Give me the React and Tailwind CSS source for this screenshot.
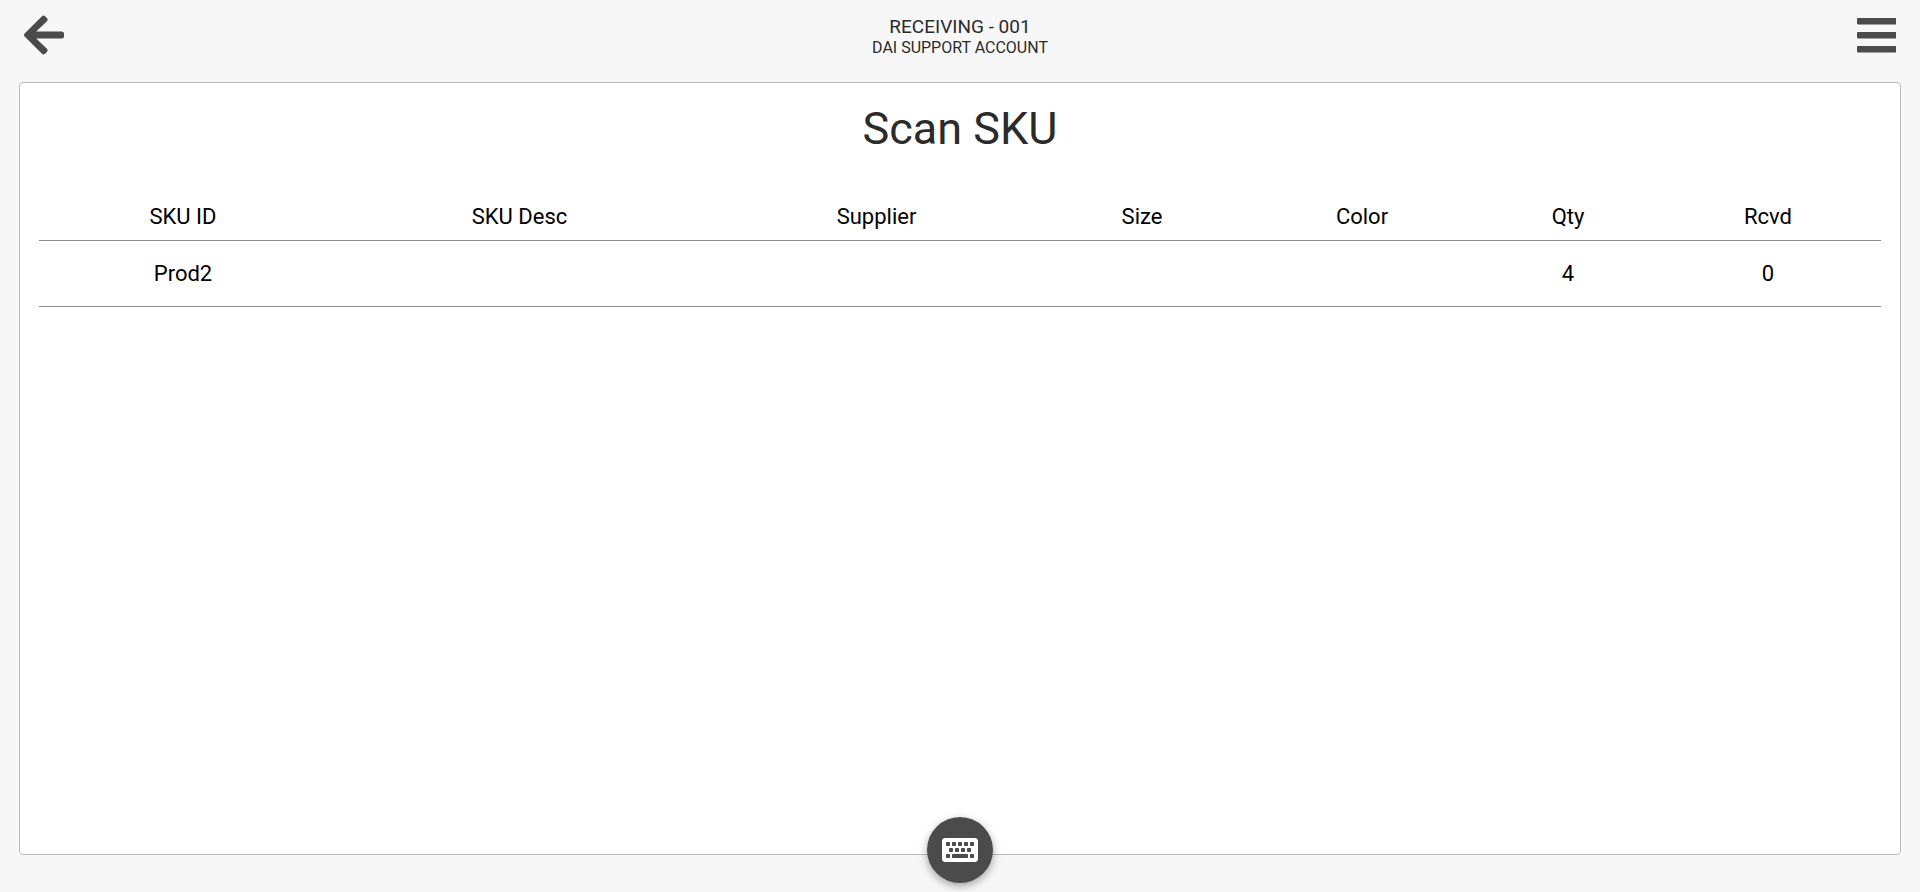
import React from 'react';
import { FaArrowLeft, FaKeyboard } from 'react-icons/fa';

const columns = [
  { key: 'sku', label: 'SKU ID', width: 'w-[288px]' },
  { key: 'desc', label: 'SKU Desc', width: 'w-[385px]' },
  { key: 'supplier', label: 'Supplier', width: 'w-[329px]' },
  { key: 'size', label: 'Size', width: 'w-[202px]' },
  { key: 'color', label: 'Color', width: 'w-[238px]' },
  { key: 'qty', label: 'Qty', width: 'w-[174px]' },
  { key: 'rcvd', label: 'Rcvd', width: 'w-[226px]' },
];

const rows = [{ sku: 'Prod2', desc: '', supplier: '', size: '', color: '', qty: 4, rcvd: 0 }];

function MenuIcon() {
  return (
    <svg viewBox="0 0 40 46" className="h-[46px] w-10" fill="currentColor" aria-hidden="true">
      <rect x="1" y="6" width="39.4" height="6.4" rx="0.8" />
      <rect x="1" y="20" width="39.4" height="6.4" rx="0.8" />
      <rect x="1" y="34" width="39.4" height="6.4" rx="0.8" />
    </svg>
  );
}

function Header() {
  return (
    <header className="flex h-[82px] items-start justify-between px-6 pt-3">
      <button type="button" aria-label="Back" className="text-[#4b4b4b]">
        <FaArrowLeft className="h-[46px] w-10" />
      </button>
      <div className="pt-1 text-center text-[#2b2b2b]">
        <div className="text-[19px] leading-[21px]">RECEIVING - 001</div>
        <div className="text-[16px] leading-[21px]">DAI SUPPORT ACCOUNT</div>
      </div>
      <button type="button" aria-label="Menu" className="text-[#4b4b4b]">
        <MenuIcon />
      </button>
    </header>
  );
}

function SkuTable() {
  return (
    <table className="w-full table-fixed border-collapse text-center text-[22px] leading-[26px] text-black">
      <thead>
        <tr className="h-[50px] border-b border-[#8a8a8a]">
          {columns.map((c) => (
            <th key={c.key} scope="col" className={`${c.width} pb-[10px] align-bottom font-normal`}>
              {c.label}
            </th>
          ))}
        </tr>
      </thead>
      <tbody>
        {rows.map((row) => (
          <tr key={row.sku} className="h-[66px] border-b border-[#8a8a8a]">
            {columns.map((c) => (
              <td key={c.key} className="pt-0.5">
                {row[c.key]}
              </td>
            ))}
          </tr>
        ))}
      </tbody>
    </table>
  );
}

export default function App() {
  return (
    <div className="flex min-h-screen flex-col bg-[#f7f7f7] font-[Roboto,sans-serif]">
      <Header />
      <main className="mx-[19px] mb-[37px] flex-1 rounded-[4px] border border-[#bbbbbb] bg-white px-[19px]">
        <h1 className="mb-[35px] pt-5 text-center text-[45px] leading-[52px] text-[#2b2b2b]">Scan SKU</h1>
        <SkuTable />
      </main>
      <button
        type="button"
        aria-label="Open keyboard"
        className="fixed bottom-[9px] left-1/2 flex size-[66px] -translate-x-1/2 items-center justify-center rounded-full bg-[#4b4b4b] text-white shadow-[0_3px_8px_rgba(0,0,0,0.35)]"
      >
        <FaKeyboard className="h-8 w-9" />
      </button>
    </div>
  );
}
